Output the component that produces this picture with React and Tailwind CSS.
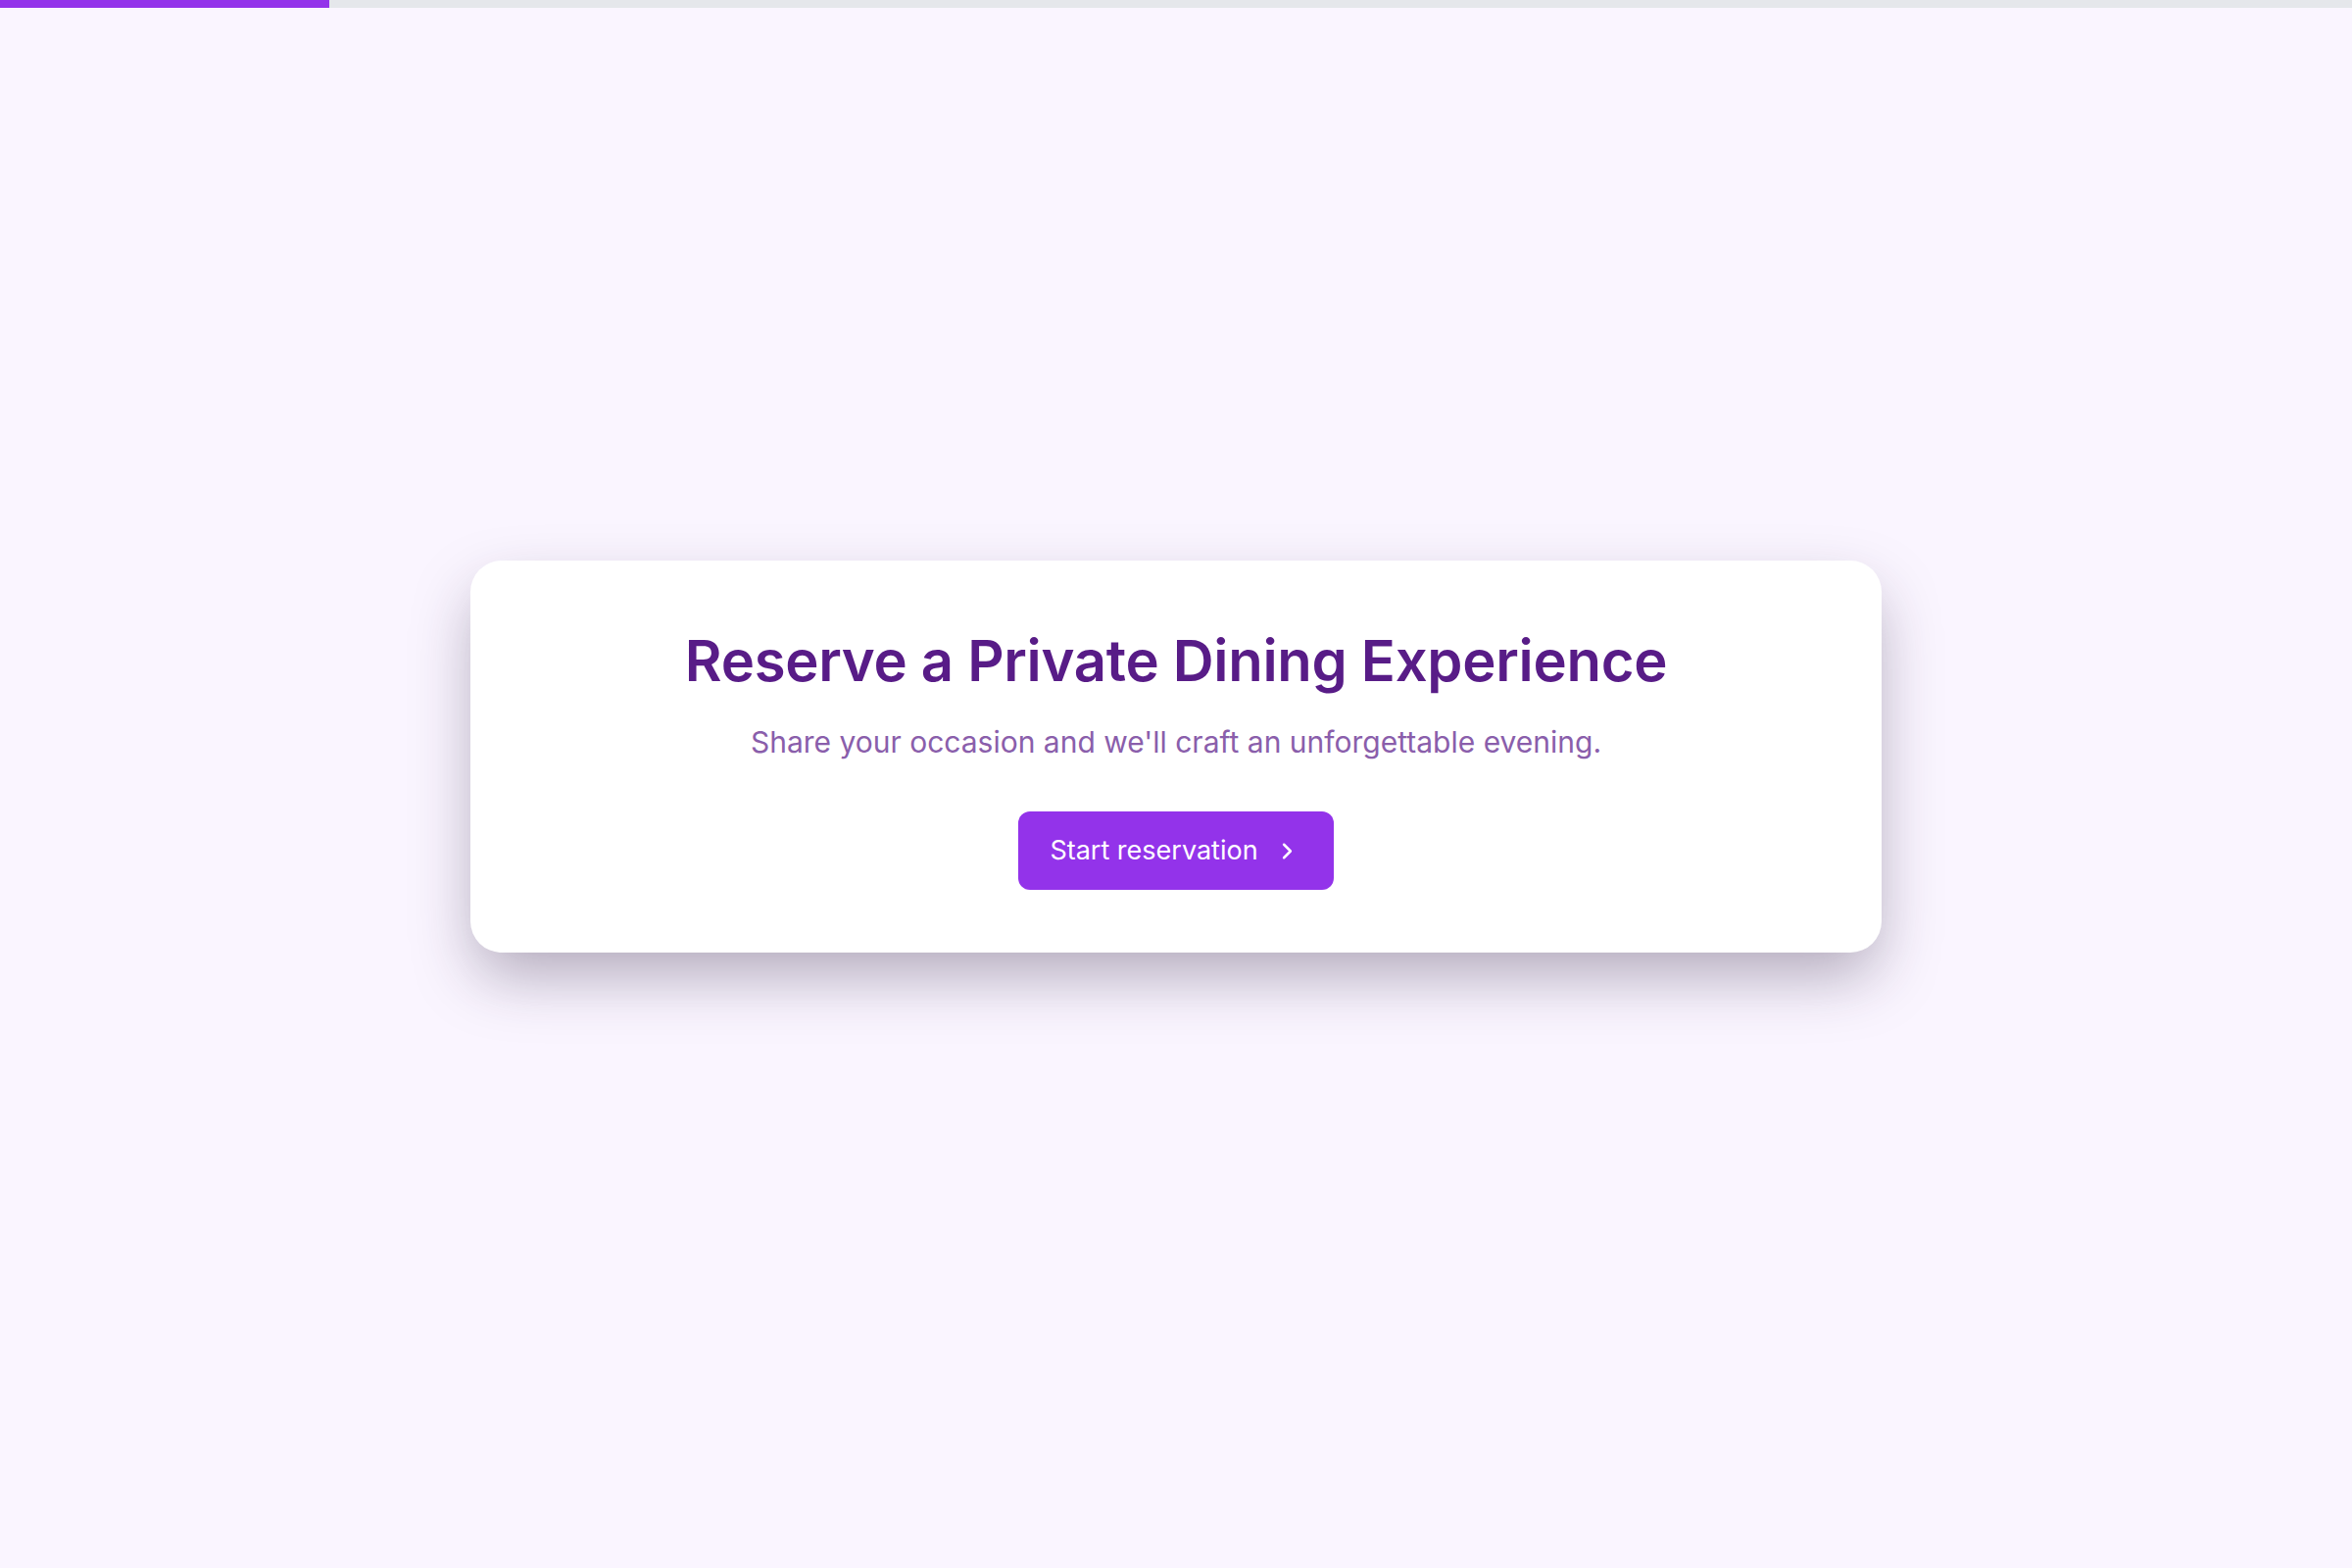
import React from "react";
import { ChevronRight } from "lucide-react";

export default function App() {
  const progress = 14;

  return (
    <div className="min-h-screen flex flex-col bg-[#faf5ff] font-['Inter','Liberation_Sans',sans-serif]">
      {/* step progress */}
      <div className="h-2 w-full bg-[#e5e7eb]">
        <div className="h-full bg-[#9333ea]" style={{ width: `${progress}%` }} />
      </div>

      <main className="flex-1 flex items-center justify-center pb-16">
        <div className="w-[1440px] rounded-[32px] bg-white px-16 pt-[73px] pb-16 flex flex-col items-center text-center shadow-[0_28px_64px_-6px_rgba(45,30,60,0.36)]">
          <h1 className="text-[58px] leading-none font-semibold text-[#581c87] tracking-[-0.005em]">
            Reserve a Private Dining Experience
          </h1>
          <p className="mt-[34px] text-[30px] leading-[40px] text-[#8a5eab]">
            Share your occasion and we'll craft an unforgettable evening.
          </p>
          <button className="mt-[51px] h-20 pl-8 pr-[34px] flex items-center gap-4 rounded-xl bg-[#9333ea] text-white text-[27px]">
            Start reservation
            <ChevronRight className="w-[27px] h-[27px]" strokeWidth={2.25} />
          </button>
        </div>
      </main>
    </div>
  );
}
